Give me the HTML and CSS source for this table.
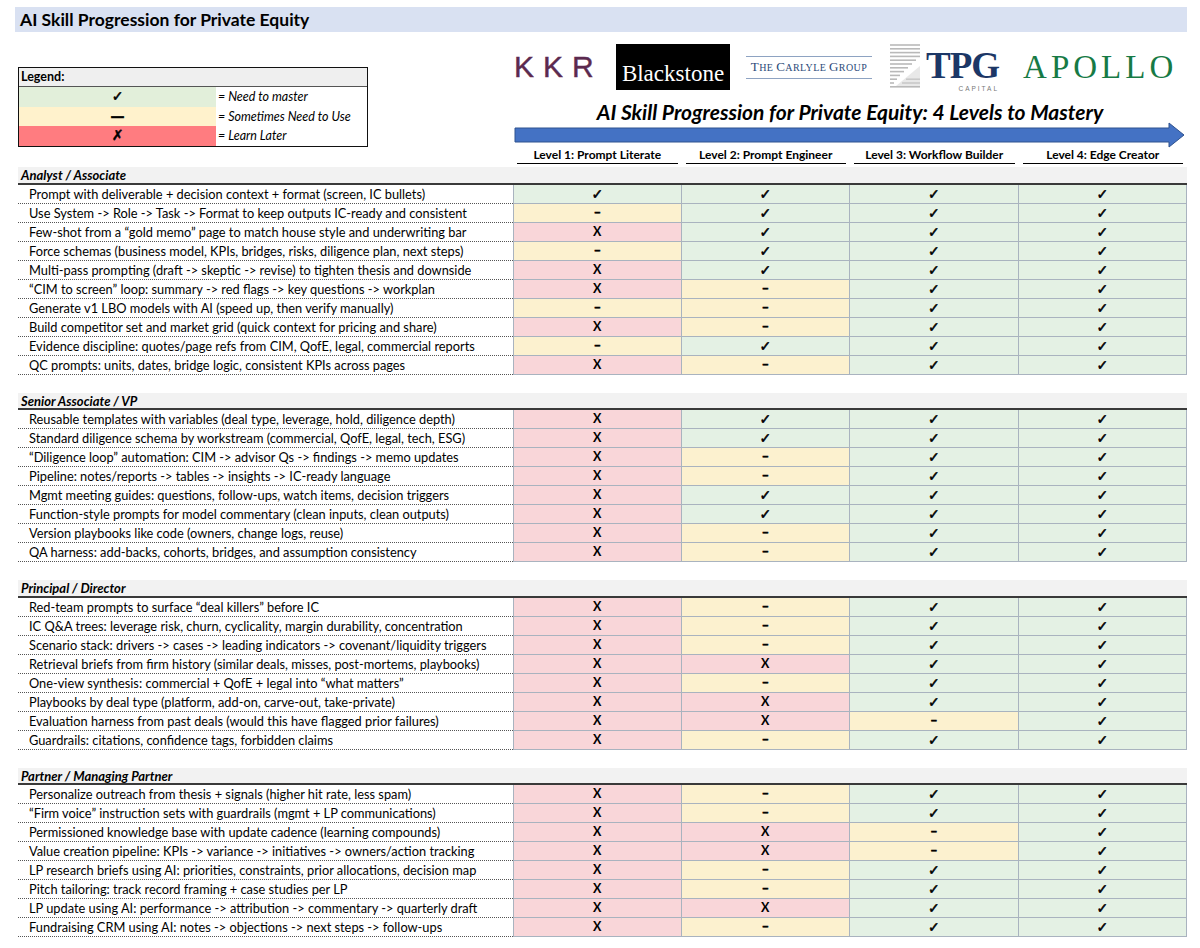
FILE: index.html
```html
<!DOCTYPE html>
<html>
<head>
<meta charset="utf-8">
<title>AI Skill Progression for Private Equity</title>
<link rel="stylesheet" href="styles.css">
</head>
<body>
<div class="page">
  <div class="title-bar">AI Skill Progression for Private Equity</div>

  <div class="top">
    <div class="legend">
      <div class="legend-head">Legend:</div>
      <div class="legend-row"><div class="lg-sym lg-g">✓</div><div class="lg-txt">= Need to master</div></div>
      <div class="legend-row"><div class="lg-sym lg-y">—</div><div class="lg-txt">= Sometimes Need to Use</div></div>
      <div class="legend-row"><div class="lg-sym lg-r">✗</div><div class="lg-txt">= Learn Later</div></div>
    </div>

    <div class="right">
      <div class="logos">
        <div class="kkr">KKR</div>
        <div class="blackstone">Blackstone</div>
        <div class="carlyle"><span class="cap">T</span>HE <span class="cap">C</span>ARLYLE <span class="cap">G</span>ROUP</div>
        <div class="tpg">
          <svg class="tpg-mark" width="32" height="46" viewBox="0 0 32 46">
            <g stroke="#b9b9b9" stroke-width="1.6">
              <line x1="0" y1="1" x2="30" y2="1"/>
              <line x1="0" y1="4.8" x2="30" y2="4.8"/>
              <line x1="0" y1="8.6" x2="30" y2="8.6"/>
              <line x1="0" y1="12.4" x2="30" y2="12.4"/>
              <line x1="0" y1="16.2" x2="26" y2="16.2"/>
              <line x1="0" y1="20" x2="22" y2="20"/>
              <line x1="0" y1="23.8" x2="18" y2="23.8"/>
              <line x1="0" y1="27.6" x2="14" y2="27.6"/>
              <line x1="0" y1="31.4" x2="10" y2="31.4"/>
              <line x1="0" y1="35.2" x2="7" y2="35.2"/>
              <line x1="0" y1="39" x2="4" y2="39"/>
              <line x1="0" y1="42.8" x2="30" y2="42.8"/>
              <line x1="12" y1="39" x2="30" y2="39"/>
              <line x1="16" y1="35.2" x2="30" y2="35.2"/>
            </g>
            <polygon points="6,42 30,22 30,42" fill="#d6d6d6" opacity="0.55"/>
          </svg>
          <div class="tpg-text">
            <div class="tpg-word">TPG</div>
            <div class="tpg-cap">CAPITAL</div>
          </div>
        </div>
        <div class="apollo">APOLLO</div>
      </div>
      <div class="heading">AI Skill Progression for Private Equity: 4 Levels to Mastery</div>
      <svg class="arrow" width="674" height="26" viewBox="0 0 674 26">
        <polygon points="2,6 656,6 656,1 671,13 656,25 656,20 2,20" fill="#4472c4" stroke="#2f528f" stroke-width="1"/>
      </svg>
      <div class="levels">
        <div class="lvl">Level 1: Prompt Literate</div>
        <div class="lvl">Level 2: Prompt Engineer</div>
        <div class="lvl">Level 3: Workflow Builder</div>
        <div class="lvl">Level 4: Edge Creator</div>
      </div>
    </div>
  </div>

  <div class="table">
    <div class="sec-head">Analyst / Associate</div>
    <div class="row"><div class="txt">Prompt with deliverable + decision context + format (screen, IC bullets)</div><div class="c y">✓</div><div class="c y">✓</div><div class="c y">✓</div><div class="c y">✓</div></div>
    <div class="row"><div class="txt">Use System -&gt; Role -&gt; Task -&gt; Format to keep outputs IC-ready and consistent</div><div class="c s">–</div><div class="c y">✓</div><div class="c y">✓</div><div class="c y">✓</div></div>
    <div class="row"><div class="txt">Few-shot from a “gold memo” page to match house style and underwriting bar</div><div class="c n">X</div><div class="c y">✓</div><div class="c y">✓</div><div class="c y">✓</div></div>
    <div class="row"><div class="txt">Force schemas (business model, KPIs, bridges, risks, diligence plan, next steps)</div><div class="c s">–</div><div class="c y">✓</div><div class="c y">✓</div><div class="c y">✓</div></div>
    <div class="row"><div class="txt">Multi-pass prompting (draft -&gt; skeptic -&gt; revise) to tighten thesis and downside</div><div class="c n">X</div><div class="c y">✓</div><div class="c y">✓</div><div class="c y">✓</div></div>
    <div class="row"><div class="txt">“CIM to screen” loop: summary -&gt; red flags -&gt; key questions -&gt; workplan</div><div class="c n">X</div><div class="c s">–</div><div class="c y">✓</div><div class="c y">✓</div></div>
    <div class="row"><div class="txt">Generate v1 LBO models with AI (speed up, then verify manually)</div><div class="c s">–</div><div class="c s">–</div><div class="c y">✓</div><div class="c y">✓</div></div>
    <div class="row"><div class="txt">Build competitor set and market grid (quick context for pricing and share)</div><div class="c n">X</div><div class="c s">–</div><div class="c y">✓</div><div class="c y">✓</div></div>
    <div class="row"><div class="txt">Evidence discipline: quotes/page refs from CIM, QofE, legal, commercial reports</div><div class="c s">–</div><div class="c y">✓</div><div class="c y">✓</div><div class="c y">✓</div></div>
    <div class="row"><div class="txt">QC prompts: units, dates, bridge logic, consistent KPIs across pages</div><div class="c n">X</div><div class="c s">–</div><div class="c y">✓</div><div class="c y">✓</div></div>
    <div class="spacer"></div>

    <div class="sec-head">Senior Associate / VP</div>
    <div class="row"><div class="txt">Reusable templates with variables (deal type, leverage, hold, diligence depth)</div><div class="c n">X</div><div class="c y">✓</div><div class="c y">✓</div><div class="c y">✓</div></div>
    <div class="row"><div class="txt">Standard diligence schema by workstream (commercial, QofE, legal, tech, ESG)</div><div class="c n">X</div><div class="c y">✓</div><div class="c y">✓</div><div class="c y">✓</div></div>
    <div class="row"><div class="txt">“Diligence loop” automation: CIM -&gt; advisor Qs -&gt; findings -&gt; memo updates</div><div class="c n">X</div><div class="c s">–</div><div class="c y">✓</div><div class="c y">✓</div></div>
    <div class="row"><div class="txt">Pipeline: notes/reports -&gt; tables -&gt; insights -&gt; IC-ready language</div><div class="c n">X</div><div class="c s">–</div><div class="c y">✓</div><div class="c y">✓</div></div>
    <div class="row"><div class="txt">Mgmt meeting guides: questions, follow-ups, watch items, decision triggers</div><div class="c n">X</div><div class="c y">✓</div><div class="c y">✓</div><div class="c y">✓</div></div>
    <div class="row"><div class="txt">Function-style prompts for model commentary (clean inputs, clean outputs)</div><div class="c n">X</div><div class="c y">✓</div><div class="c y">✓</div><div class="c y">✓</div></div>
    <div class="row"><div class="txt">Version playbooks like code (owners, change logs, reuse)</div><div class="c n">X</div><div class="c s">–</div><div class="c y">✓</div><div class="c y">✓</div></div>
    <div class="row"><div class="txt">QA harness: add-backs, cohorts, bridges, and assumption consistency</div><div class="c n">X</div><div class="c s">–</div><div class="c y">✓</div><div class="c y">✓</div></div>
    <div class="spacer"></div>

    <div class="sec-head">Principal / Director</div>
    <div class="row"><div class="txt">Red-team prompts to surface “deal killers” before IC</div><div class="c n">X</div><div class="c s">–</div><div class="c y">✓</div><div class="c y">✓</div></div>
    <div class="row"><div class="txt">IC Q&amp;A trees: leverage risk, churn, cyclicality, margin durability, concentration</div><div class="c n">X</div><div class="c s">–</div><div class="c y">✓</div><div class="c y">✓</div></div>
    <div class="row"><div class="txt">Scenario stack: drivers -&gt; cases -&gt; leading indicators -&gt; covenant/liquidity triggers</div><div class="c n">X</div><div class="c s">–</div><div class="c y">✓</div><div class="c y">✓</div></div>
    <div class="row"><div class="txt">Retrieval briefs from firm history (similar deals, misses, post-mortems, playbooks)</div><div class="c n">X</div><div class="c n">X</div><div class="c y">✓</div><div class="c y">✓</div></div>
    <div class="row"><div class="txt">One-view synthesis: commercial + QofE + legal into “what matters”</div><div class="c n">X</div><div class="c s">–</div><div class="c y">✓</div><div class="c y">✓</div></div>
    <div class="row"><div class="txt">Playbooks by deal type (platform, add-on, carve-out, take-private)</div><div class="c n">X</div><div class="c n">X</div><div class="c y">✓</div><div class="c y">✓</div></div>
    <div class="row"><div class="txt">Evaluation harness from past deals (would this have flagged prior failures)</div><div class="c n">X</div><div class="c n">X</div><div class="c s">–</div><div class="c y">✓</div></div>
    <div class="row"><div class="txt">Guardrails: citations, confidence tags, forbidden claims</div><div class="c n">X</div><div class="c s">–</div><div class="c y">✓</div><div class="c y">✓</div></div>
    <div class="spacer"></div>

    <div class="sec-head">Partner / Managing Partner</div>
    <div class="row"><div class="txt">Personalize outreach from thesis + signals (higher hit rate, less spam)</div><div class="c n">X</div><div class="c s">–</div><div class="c y">✓</div><div class="c y">✓</div></div>
    <div class="row"><div class="txt">“Firm voice” instruction sets with guardrails (mgmt + LP communications)</div><div class="c n">X</div><div class="c s">–</div><div class="c y">✓</div><div class="c y">✓</div></div>
    <div class="row"><div class="txt">Permissioned knowledge base with update cadence (learning compounds)</div><div class="c n">X</div><div class="c n">X</div><div class="c s">–</div><div class="c y">✓</div></div>
    <div class="row"><div class="txt">Value creation pipeline: KPIs -&gt; variance -&gt; initiatives -&gt; owners/action tracking</div><div class="c n">X</div><div class="c n">X</div><div class="c s">–</div><div class="c y">✓</div></div>
    <div class="row"><div class="txt">LP research briefs using AI: priorities, constraints, prior allocations, decision map</div><div class="c n">X</div><div class="c s">–</div><div class="c y">✓</div><div class="c y">✓</div></div>
    <div class="row"><div class="txt">Pitch tailoring: track record framing + case studies per LP</div><div class="c n">X</div><div class="c s">–</div><div class="c y">✓</div><div class="c y">✓</div></div>
    <div class="row"><div class="txt">LP update using AI: performance -&gt; attribution -&gt; commentary -&gt; quarterly draft</div><div class="c n">X</div><div class="c n">X</div><div class="c y">✓</div><div class="c y">✓</div></div>
    <div class="row"><div class="txt">Fundraising CRM using AI: notes -&gt; objections -&gt; next steps -&gt; follow-ups</div><div class="c n">X</div><div class="c s">–</div><div class="c y">✓</div><div class="c y">✓</div></div>
  </div>
</div>
</body>
</html>
```

FILE: styles.css
```css
* { box-sizing: border-box; }

body {
  margin: 0;
  background: #fff;
  color: #000;
  font-family: Lato, "Open Sans", sans-serif;
  width: 1200px;
}

.page {
  padding: 7px 13px 0 18px;
}

.title-bar {
  margin-left: -3px;
  height: 25px;
  line-height: 25px;
  padding-left: 5px;
  background: #d9e1f2;
  font-size: 17.5px;
  font-weight: 700;
}

/* ---------- top area ---------- */
.top {
  display: flex;
  height: 135px;
}

.legend {
  align-self: flex-start;
  width: 350px;
  margin-top: 35px;
  border: 1px solid #111;
  font-size: 12.5px;
}

.legend-head {
  height: 19px;
  line-height: 18px;
  padding-left: 2px;
  background: #efefef;
  border-bottom: 1px solid #555;
  font-weight: 700;
}

.legend-row {
  display: flex;
  height: 19.5px;
}

.lg-sym {
  width: 197px;
  text-align: center;
  line-height: 19px;
  font-family: "DejaVu Sans", sans-serif;
  font-weight: 700;
  font-size: 14px;
  -webkit-text-stroke: 0.5px #000;
}

.lg-g { background: #e2efda; }
.lg-y { background: #fff2cc; }
.lg-r { background: #ff7c80; }

.lg-txt {
  flex: 1;
  padding-left: 2px;
  line-height: 19px;
  font-style: italic;
}

.right {
  width: 674px;
  margin-left: 145px;
}

.logos {
  display: flex;
  align-items: center;
  height: 50px;
  margin-top: 10px;
}

.kkr {
  width: 103px;
  padding-left: 1px;
  font-family: "Liberation Sans", sans-serif;
  font-size: 30px;
  letter-spacing: 9px;
  color: #5b2a4f;
  line-height: 1;
  -webkit-text-stroke: 0.4px #5b2a4f;
}

.blackstone {
  width: 114px;
  height: 46px;
  background: #000;
  color: #fff;
  font-family: "Liberation Serif", serif;
  font-size: 23px;
  text-align: center;
  padding-top: 18px;
  line-height: 1;
}

.carlyle {
  margin-left: 16px;
  width: 126px;
  border-top: 1px solid #8ea3c2;
  border-bottom: 1px solid #8ea3c2;
  padding: 2px 0 3px;
  font-family: "Liberation Serif", serif;
  font-size: 10px;
  color: #2c4a7a;
  text-align: center;
  letter-spacing: 0.4px;
  white-space: nowrap;
}

.carlyle .cap { font-size: 13px; }

.tpg {
  display: flex;
  align-items: flex-start;
  margin-left: 18px;
  height: 46px;
}

.tpg-mark { display: block; }

.tpg-text {
  margin-left: 4px;
  display: flex;
  flex-direction: column;
  align-items: flex-end;
}

.tpg-word {
  font-family: "Liberation Serif", serif;
  font-weight: 700;
  font-size: 37px;
  line-height: 36px;
  color: #1c3766;
  letter-spacing: -1px;
  margin-top: 4px;
}

.tpg-cap {
  font-family: "Liberation Sans", sans-serif;
  font-size: 6.5px;
  letter-spacing: 2px;
  color: #777;
  margin-top: 1px;
}

.apollo {
  margin-left: 24px;
  font-family: "Liberation Serif", serif;
  font-size: 33px;
  letter-spacing: 4px;
  color: #177a45;
  line-height: 1;
}

.heading {
  margin-top: 8px;
  height: 23px;
  line-height: 23px;
  text-align: center;
  font-size: 21px;
  font-weight: 700;
  font-style: italic;
}

.arrow {
  display: block;
  margin-top: -1px;
}

.levels {
  display: flex;
  margin-top: 0;
}

.lvl {
  flex: 1;
  margin: 0 4px;
  height: 16px;
  line-height: 14px;
  text-align: center;
  font-size: 12px;
  font-weight: 700;
  border-bottom: 1px solid #000;
}

/* ---------- table ---------- */
.table {
  width: 1169px;
}

.sec-head {
  height: 17.5px;
  line-height: 16px;
  padding-left: 3px;
  background: #f2f2f2;
  border-bottom: 2px solid #3a3a3a;
  font-size: 13px;
  font-weight: 700;
  font-style: italic;
}

.row {
  display: grid;
  grid-template-columns: 495px repeat(4, 1fr);
  height: 19px;
}

.txt {
  padding-left: 11px;
  line-height: 18px;
  font-size: 12.8px;
  white-space: nowrap;
  border-bottom: 1px dotted #555;
}

.c {
  text-align: center;
  line-height: 18px;
  font-size: 12.5px;
  font-weight: 700;
  border-right: 1px solid #a9b3bf;
  border-bottom: 1px solid #a9b3bf;
}

.txt + .c { border-left: 1px solid #a9b3bf; }

.c.y {
  background: #e4f1e4;
  font-family: "DejaVu Sans", sans-serif;
  font-size: 14px;
  -webkit-text-stroke: 0.5px #000;
}

.c.s {
  background: #fcf1cf;
  font-weight: 900;
  -webkit-text-stroke: 0.6px #000;
}

.c.n { background: #f9d6d9; }

.spacer { height: 18px; }
```
